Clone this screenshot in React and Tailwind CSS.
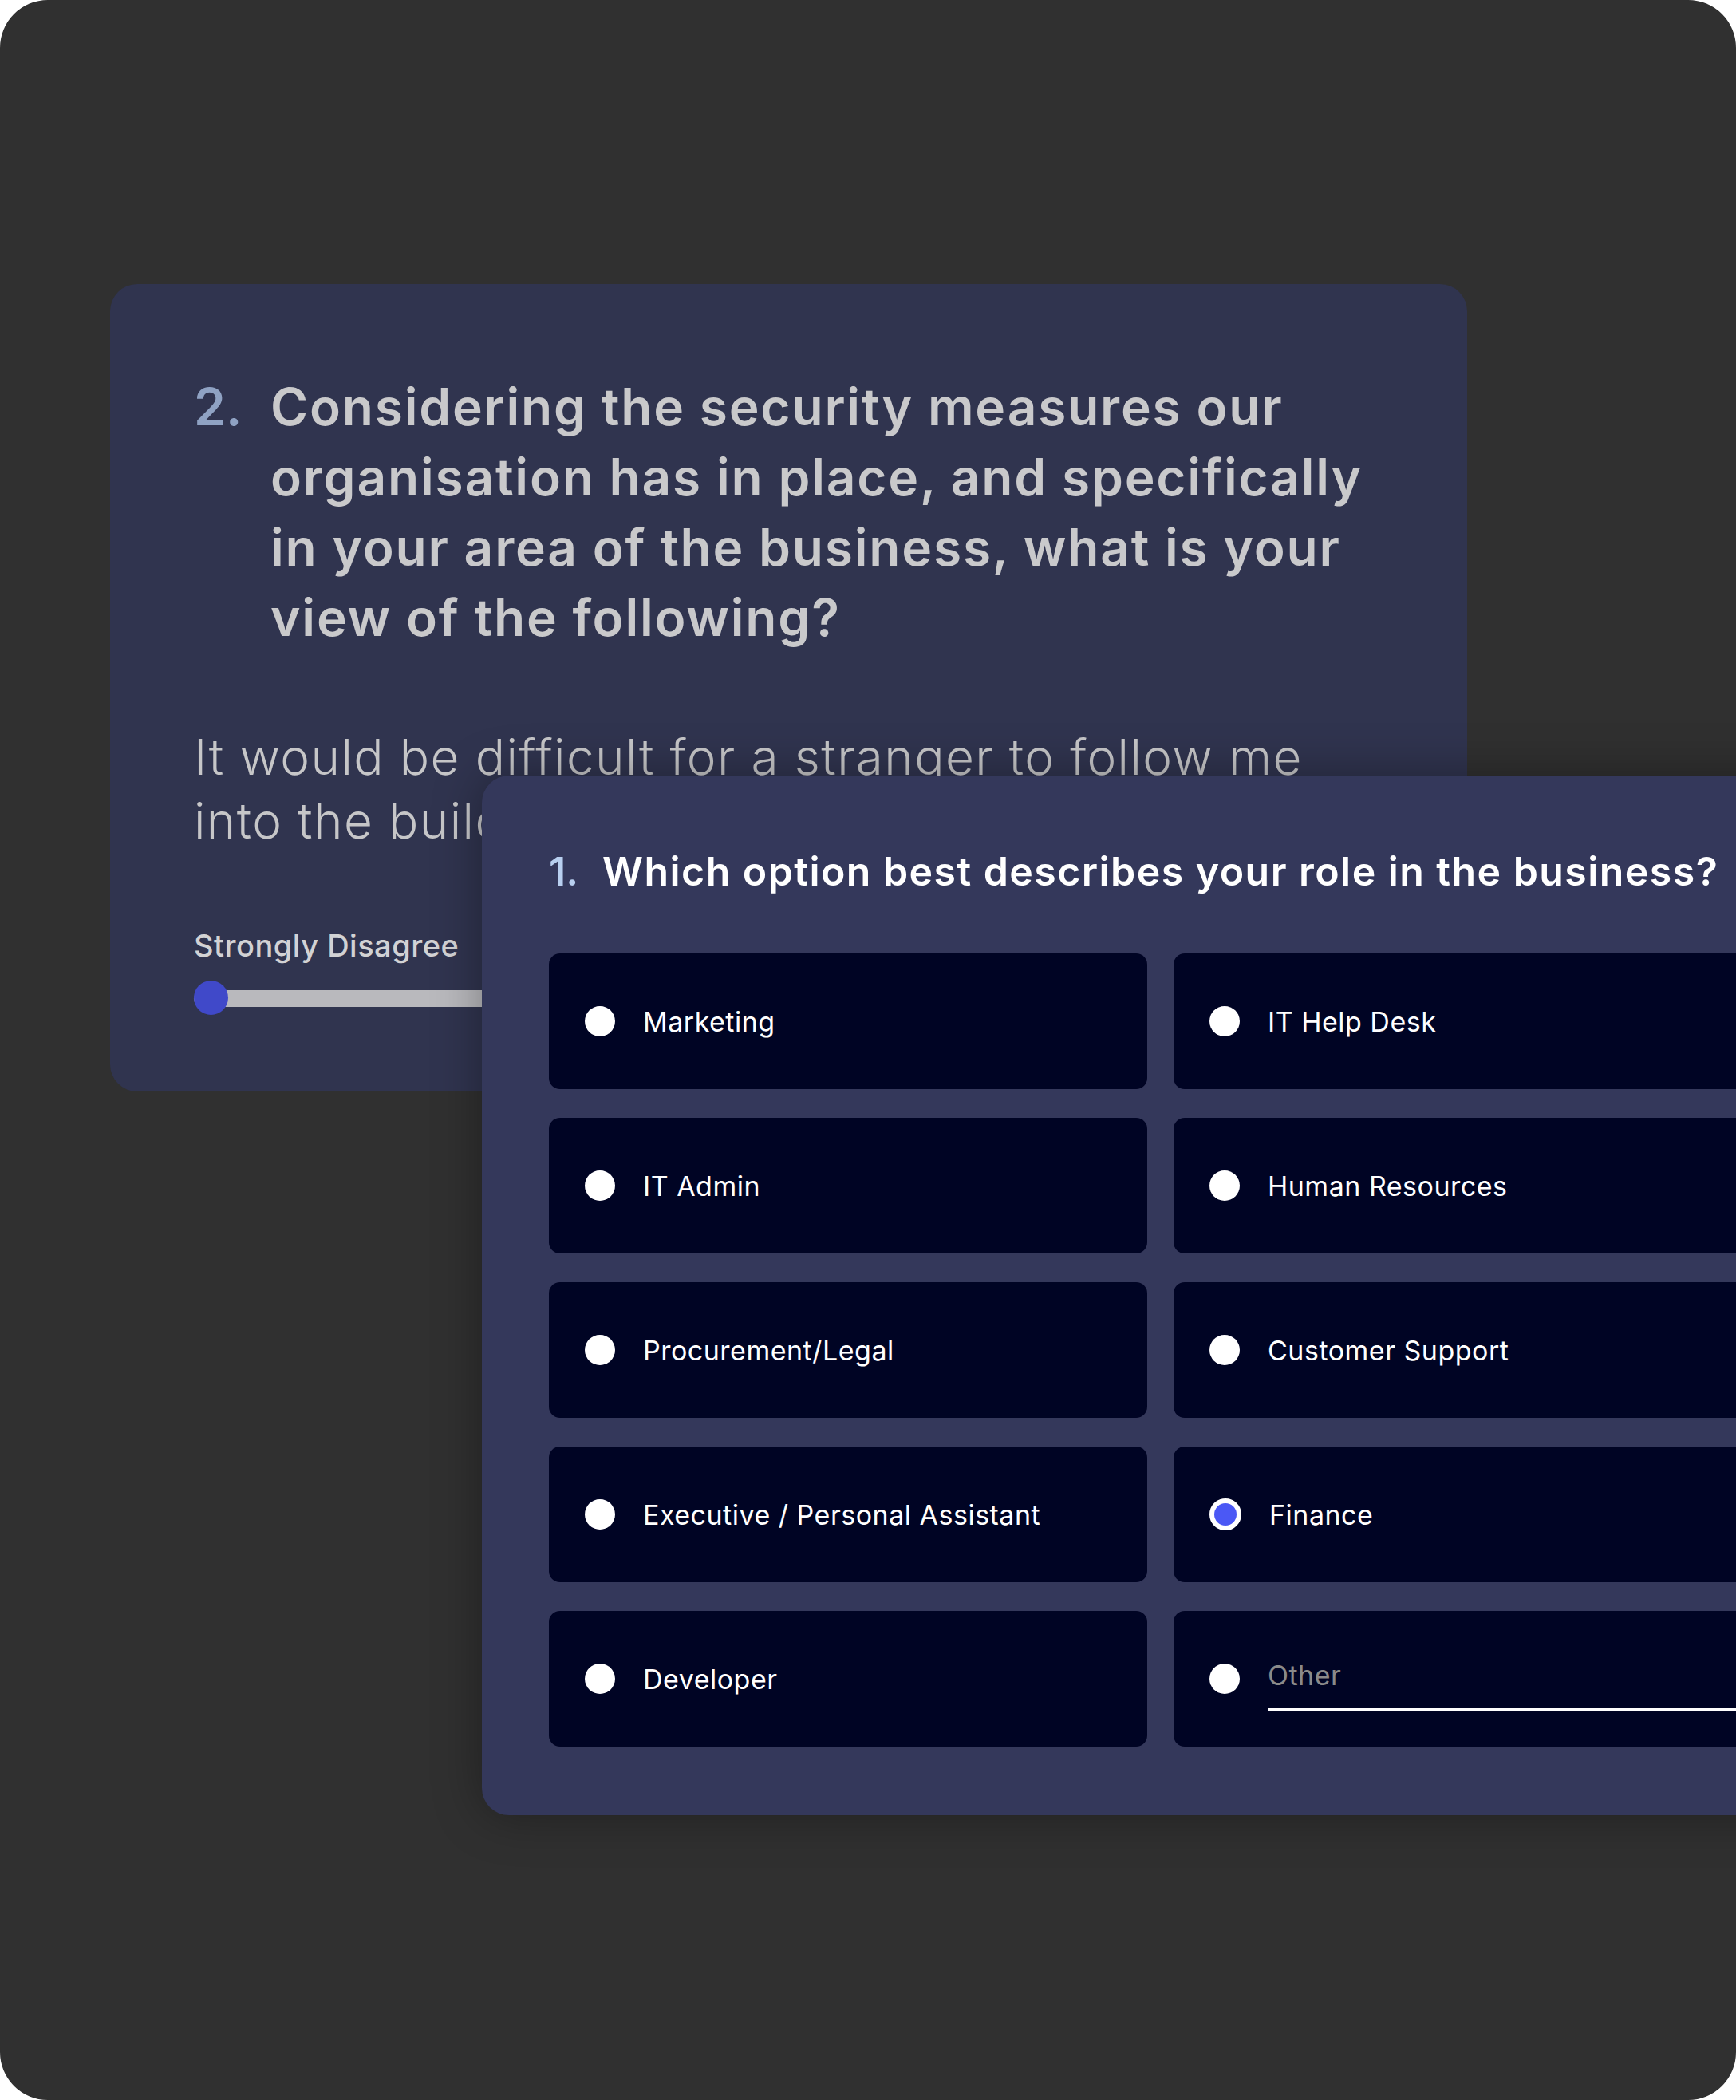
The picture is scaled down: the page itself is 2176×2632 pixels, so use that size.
import React from 'react';

const options = [
  { label: 'Marketing' },
  { label: 'IT Help Desk' },
  { label: 'IT Admin' },
  { label: 'Human Resources' },
  { label: 'Procurement/Legal' },
  { label: 'Customer Support' },
  { label: 'Executive / Personal Assistant' },
  { label: 'Finance', selected: true },
  { label: 'Developer' },
  { label: 'Other', input: true },
];

const Radio = ({ selected }) =>
  selected ? (
    <span className="w-[40px] h-[40px] shrink-0 rounded-full border-[6px] border-white bg-[#4b58f5]" />
  ) : (
    <span className="w-[38px] h-[38px] shrink-0 rounded-full bg-white" />
  );

const Option = ({ label, selected, input }) => (
  <div className="h-[170px] rounded-[14px] bg-[#000424] flex items-center pl-[45px] pr-[40px] gap-[35px]">
    <Radio selected={selected} />
    {input ? (
      <div className="flex-1 mt-[10px] border-b-4 border-white pb-[16px] text-[#8a8a8a]">{label}</div>
    ) : (
      <span className="text-white">{label}</span>
    )}
  </div>
);

export default function App() {
  return (
    <div className="w-[2176px] h-[2632px] bg-white font-['Inter',sans-serif]">
      <div className="relative h-full rounded-[60px] bg-[#303030] overflow-hidden pt-[356px] pl-[138px]">
        {/* question 2, sitting behind */}
        <div className="w-[1701px] h-[1012px] rounded-[34px] bg-[#30344f] pl-[105px] pr-[40px] pt-[110px]">
          <h2 className="flex text-[64px] leading-[88px] font-semibold tracking-[1.8px] text-[#c9c9cb]">
            <span className="w-[96px] shrink-0 tracking-normal text-[#8fa2c3]">2.</span>
            <span>
              Considering the security measures our
              <br />
              organisation has in place, and specifically
              <br />
              in your area of the business, what is your
              <br />
              view of the following?
            </span>
          </h2>
          <p className="mt-[91px] text-[62px] leading-[80px] font-light tracking-[1.4px] text-[#c6c6c8]">
            It would be difficult for a stranger to follow me
            <br />
            into the building without being noticed.
          </p>
          <div className="mt-[92px] text-[38px] leading-[48px] font-medium tracking-[0.5px] text-[#d2d2d4]">
            Strongly Disagree
          </div>
          <div className="mt-[20px] relative h-[44px] w-[1480px] flex items-center">
            <div className="h-[21px] w-full rounded-full bg-[#b9b9bd]" />
            <div className="absolute left-0 top-0 w-[43px] h-[43px] rounded-full bg-[#4049c9]" />
          </div>
        </div>

        {/* question 1, on top */}
        <div className="absolute left-[604px] top-[972px] w-[1701px] h-[1303px] rounded-[34px] bg-[#34385b] shadow-[0_0_60px_rgba(0,0,0,0.35)] px-[84px] pt-[83px]">
          <h1 className="flex text-[50px] leading-[75px] font-semibold tracking-[1.45px] text-white">
            <span className="w-[67px] shrink-0 tracking-normal text-[#b8cff0]">1.</span>
            <span>Which option best describes your role in the business?</span>
          </h1>
          <div className="mt-[65px] grid grid-cols-2 gap-x-[33px] gap-y-[36px] text-[34px] leading-[51px] tracking-[0.5px]">
            {options.map((o) => (
              <Option key={o.label} {...o} />
            ))}
          </div>
        </div>
      </div>
    </div>
  );
}
